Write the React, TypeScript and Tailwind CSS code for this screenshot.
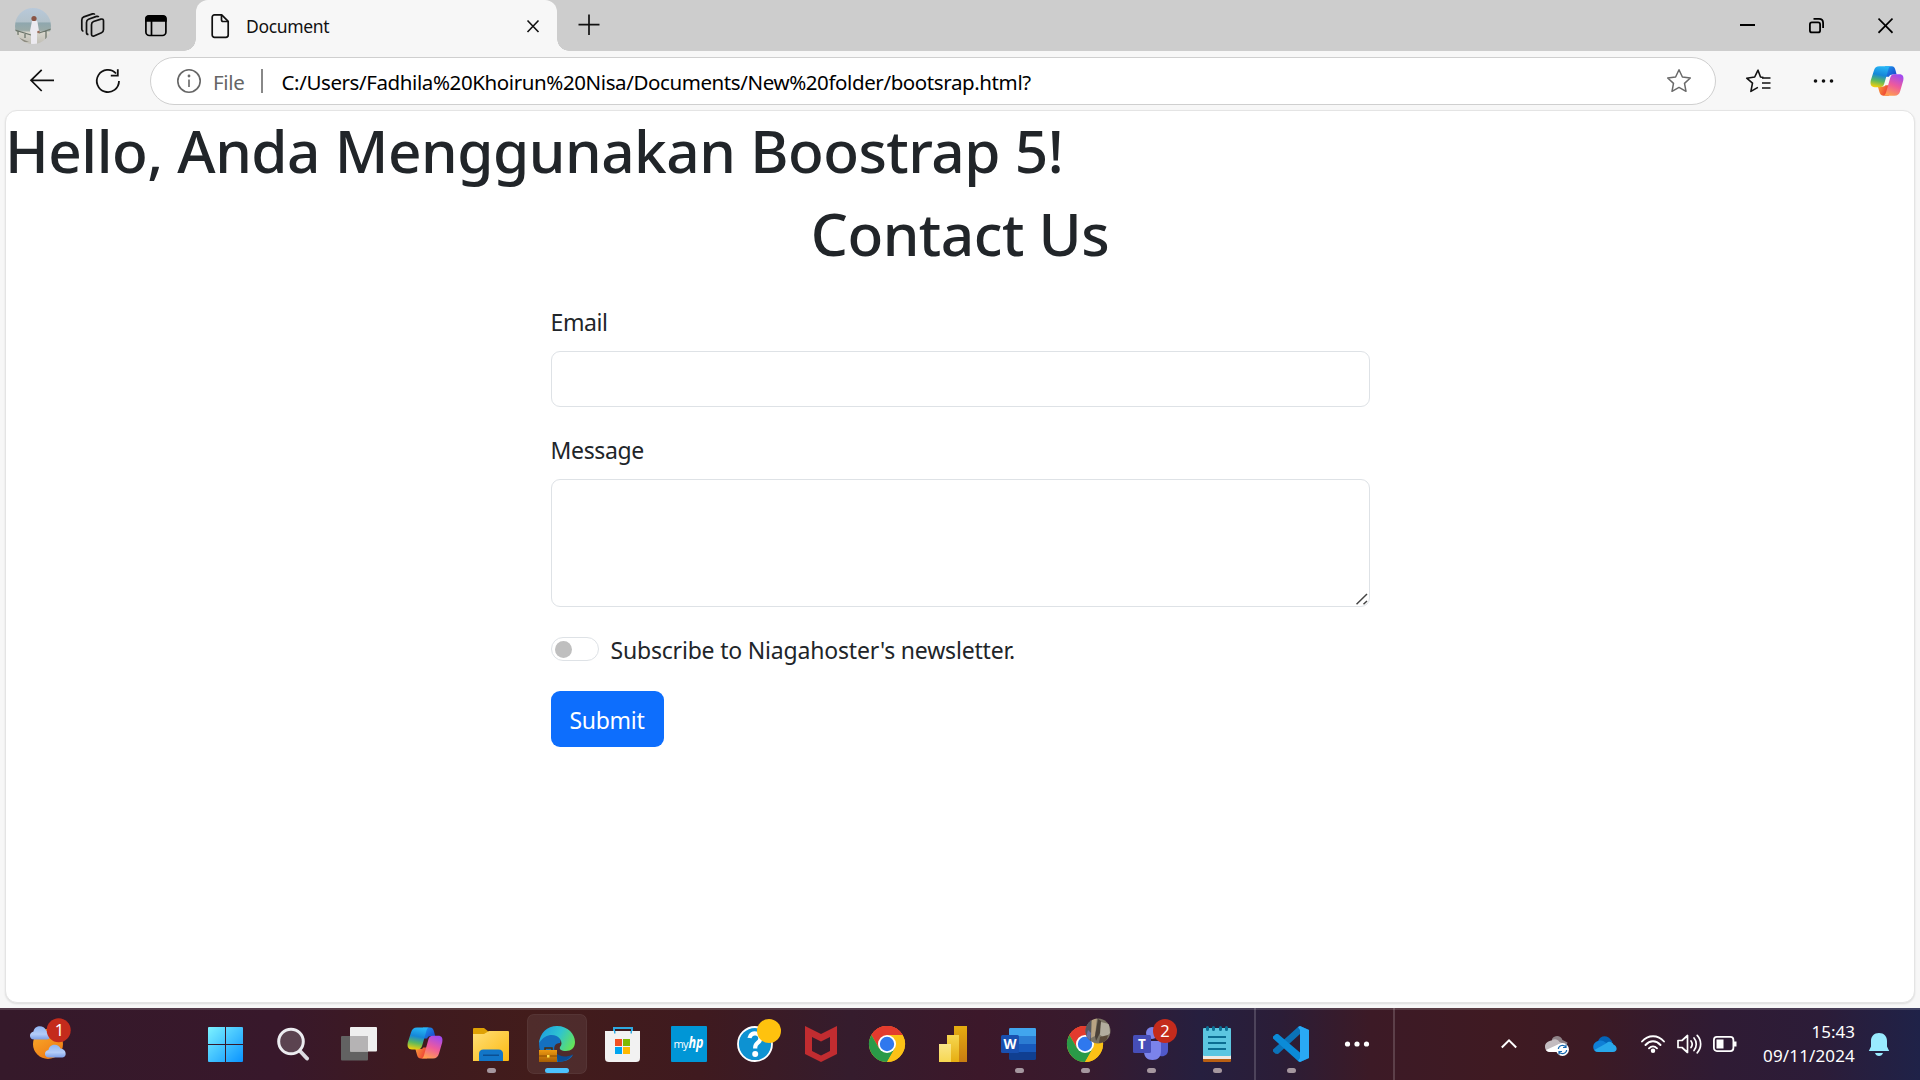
import React from 'react';

const UI = "font-['Noto_Sans','Open_Sans',sans-serif]";

function CopilotDefs({ id }: { id: string }) {
  return (
    <defs>
      <linearGradient id={`${id}a`} x1="0.5" y1="0" x2="0.3" y2="1">
        <stop offset="0" stopColor="#27b5f5" />
        <stop offset="0.4" stopColor="#1587d8" />
        <stop offset="0.7" stopColor="#5cb85f" />
        <stop offset="1" stopColor="#f3cf0c" />
      </linearGradient>
      <linearGradient id={`${id}b`} x1="0.7" y1="0" x2="0.3" y2="1">
        <stop offset="0" stopColor="#a24af0" />
        <stop offset="0.5" stopColor="#ee5a9c" />
        <stop offset="1" stopColor="#ffa04e" />
      </linearGradient>
      <linearGradient id={`${id}c`} x1="0" y1="0" x2="1" y2="1">
        <stop offset="0" stopColor="#1c9cf0" />
        <stop offset="1" stopColor="#1b3fc8" />
      </linearGradient>
      <linearGradient id={`${id}d`} x1="0" y1="0" x2="1" y2="0.4">
        <stop offset="0" stopColor="#f8a13a" />
        <stop offset="1" stopColor="#ee3b35" />
      </linearGradient>
    </defs>
  );
}

function CopilotShape({ id }: { id: string }) {
  return (
    <>
      <CopilotDefs id={id} />
      <path d="M16 1h7c2.300 0 3.300 1.600 4 4l1.200 4.500h-4c-2.200 0-3.400.8-4.200 2.500h-4z" fill={`url(#${id}c)`} />
      <path d="M20 32h-6c-2.500 0-3.400-1.600-4.100-4L8.400 22.500h4.600c1.800 0 2.700-.4 3.300-1.500h4z" fill={`url(#${id}d)`} />
      <path d="M10 1h12.500c-2 0-2.600 1.500-3.300 4l-4 14c-.8 2.800-2 4-4.500 4H5C1 23 0 20 .8 16L4 6c1-3.500 2.800-5 6-5z" fill={`url(#${id}a)`} />
      <path d="M26 32H13.800c2 0 2.700-1.500 3.400-4l4.200-15c.8-2.600 2-3.700 4.500-3.700H31c4 0 5 2.700 4.200 6.700L32 27c-1 3.500-2.800 5-6 5z" fill={`url(#${id}b)`} />
    </>
  );
}

function TabStrip() {
  return (
    <div className="flex h-[51px] items-stretch bg-[#cdcdcd]">
      <div className="flex w-[196px] items-center">
        <svg className="ml-[15px] h-9 w-9 rounded-full" viewBox="0 0 36 36">
          <defs>
            <linearGradient id="sky" x1="0" y1="0" x2="0" y2="1">
              <stop offset="0" stopColor="#b8c9da" />
              <stop offset="0.38" stopColor="#b3c2cb" />
              <stop offset="0.42" stopColor="#8fa7ae" />
              <stop offset="0.62" stopColor="#9aaaa7" />
              <stop offset="0.68" stopColor="#d8d6cc" />
              <stop offset="1" stopColor="#bfbdb4" />
            </linearGradient>
          </defs>
          <rect width="36" height="36" fill="url(#sky)" />
          <path d="M0 22l16 5M24 25l12-4M3 23v4M10 25v5M31 22v9" stroke="#6d766c" strokeWidth="1.300" />
          <path d="M0 28l14 6H0z" fill="#8d8b80" />
          <path d="M17 13c2-1.500 5-1 5.500 1l1.500 9-2 2v11h-6V26l-1-3z" fill="#eceaf0" />
          <circle cx="19" cy="10.500" r="2.600" fill="#8a5546" />
          <circle cx="23.500" cy="24" r="1.300" fill="#9a6a58" />
        </svg>
        <svg className="ml-[27px] h-7 w-7" viewBox="0 0 28 28" fill="none" stroke="#111" strokeWidth="1.700" strokeLinejoin="round">
          <path d="M15.500 9.500l7.500-2.400c1.400-.4 2.500.4 2.500 1.700v9c0 1.300-.8 2.400-2 2.900L16 24c-1.500.5-2.500-.3-2.500-1.700v-9.600c0-1.500.7-2.700 2-3.200z" />
          <path d="M10.500 22.500c-1.300 0-2-.8-2-2v-10c0-1.600.7-2.700 2-3.200l8-2.900c1-.3 1.800 0 2.200.7" />
          <path d="M5.500 19c-1 0-1.700-.8-1.700-2V8c0-1.500.7-2.600 2-3.100l8.700-3c1-.3 1.800-.1 2.300.7" />
        </svg>
        <svg className="ml-[38px] h-6 w-6" viewBox="0 0 24 24" fill="none" stroke="#000" strokeWidth="1.700">
          <rect x="1.900" y="1.900" width="20" height="19.600" rx="3.500" />
          <path d="M2 7V4.500C2 3 3 2 4.500 2h14.800c1.500 0 2.600 1 2.600 2.500V7z" fill="#000" />
          <path d="M7.500 7v14" />
        </svg>
      </div>
      <div className="relative flex w-[361px] items-center rounded-t-[12px] bg-[#f7f7f7]">
        <div className="absolute bottom-0 -left-3 h-3 w-3 bg-[radial-gradient(circle_at_0_0,#cdcdcd_11.5px,#f7f7f7_12px)]" />
        <div className="absolute -right-3 bottom-0 h-3 w-3 bg-[radial-gradient(circle_at_100%_0,#cdcdcd_11.5px,#f7f7f7_12px)]" />
        <svg className="ml-[14px] h-[26px] w-5" viewBox="0 0 20 26" fill="none" stroke="#111" strokeWidth="1.700" strokeLinejoin="round">
          <path d="M4.500 1.900h7.200l6.500 6.500V22c0 1.400-1 2.300-2.300 2.300H4.500c-1.300 0-2.300-1-2.300-2.300V4.200c0-1.400 1-2.300 2.300-2.300z" />
          <path d="M11.500 2v4.800c0 1 .7 1.700 1.700 1.700H18" />
        </svg>
        <span className="ml-4 flex-1 text-[17.500px] leading-6 tracking-[-0.35px] text-[#111]">Document</span>
        <svg className="mr-[16px] h-4 w-4" viewBox="0 0 16 16" stroke="#111" strokeWidth="1.600">
          <path d="M2.500 2.500l11 11.500M13.500 2.500l-11 11.500" />
        </svg>
      </div>
      <svg className="ml-[20px] h-[50px] w-6" viewBox="0 0 24 50" stroke="#111" strokeWidth="1.700">
        <path d="M1.500 24.700h21M12 14.500v20.500" />
      </svg>
      <div className="ml-auto flex items-center">
        <svg className="mr-[54px] h-[51px] w-[15px]" viewBox="0 0 15 51">
          <rect y="24" width="15" height="2" />
        </svg>
        <svg className="mr-[54px] h-[51px] w-[15px]" viewBox="0 0 15 51" fill="none" stroke="#000" strokeWidth="1.800">
          <rect x="0.900" y="22.400" width="10.200" height="10" rx="2" />
          <path d="M4.500 18.900H10c2.500 0 4.100 1.600 4.100 4.100V28" />
        </svg>
        <svg className="mr-[27px] h-[51px] w-[15px]" viewBox="0 0 15 51" stroke="#000" strokeWidth="1.700">
          <path d="M0.500 18.500l14 14.300M14.500 18.500l-14 14.300" />
        </svg>
      </div>
    </div>
  );
}

function Toolbar() {
  return (
    <div className="flex h-[60px] items-center bg-[#f7f7f7]">
      <svg className="ml-[29px] h-7 w-7" viewBox="0 0 28 28" fill="none" stroke="#111" strokeWidth="1.700">
        <path d="M25 13.300H2M12.700 2.800L2 13.300l10.700 10.700" />
      </svg>
      <svg className="ml-[37px] h-7 w-7" viewBox="0 0 28 28" fill="none" stroke="#111" strokeWidth="1.800">
        <path d="M25 14a11.100 11.100 0 1 1-2.900-7.500" />
        <path d="M23.800 2.200v6.500h-7" />
      </svg>
      <div className="ml-[28px] flex h-[48px] w-[1566px] items-center rounded-full border-[1.500px] border-[#cfcfcf] bg-white">
        <svg className="ml-[25px] h-[26px] w-[26px]" viewBox="0 0 26 26" fill="none" stroke="#666" strokeWidth="1.600">
          <circle cx="13" cy="13" r="11.200" />
          <path d="M13 11.500v7.500" />
          <circle cx="13" cy="8" r="0.600" fill="#666" />
        </svg>
        <span className="ml-[11px] w-[31px] pt-[1px] text-[20.500px] leading-6 tracking-[-0.35px] text-[#666]">File</span>
        <div className="ml-[17px] h-6 w-[1.500px] bg-[#888]" />
        <span className="ml-[19px] flex-1 pt-[1px] text-[20.500px] leading-6 tracking-[-0.4px] whitespace-nowrap text-black">
          C:/Users/Fadhila%20Khoirun%20Nisa/Documents/New%20folder/bootsrap.html?
        </span>
        <svg className="mr-[23px] h-[26px] w-[26px]" viewBox="0 0 26 26" fill="none" stroke="#6a6a6a" strokeWidth="1.500" strokeLinejoin="round">
          <path d="M13 1.800l3.400 7.200 7.900 1-5.800 5.400 1.500 7.900-7-3.900-7 3.900 1.500-7.900L1.700 10l7.900-1z" />
        </svg>
      </div>
      <svg className="ml-[29px] h-[26px] w-[26px]" viewBox="0 0 26 26" fill="none" stroke="#111" strokeWidth="1.600" strokeLinejoin="round">
        <path d="M18.500 9.500L15.500 9 13 2.200 9.700 9l-8 1.200 5.800 5-1.600 8.200 7-4" />
        <path d="M17 10h8.500M17 15h8.500M17 20h8.500" />
      </svg>
      <svg className="ml-[40px] h-6 w-6" viewBox="0 0 24 24" fill="#111">
        <circle cx="4.500" cy="12" r="1.800" />
        <circle cx="12.500" cy="12" r="1.800" />
        <circle cx="20.500" cy="12" r="1.800" />
      </svg>
      <svg className="mr-[16px] ml-auto h-[32px] w-[34px]" viewBox="0 0 36 33">
        <CopilotShape id="cpt" />
      </svg>
    </div>
  );
}

function Page() {
  return (
    <div className="mx-[5px] -mt-px h-[893px] overflow-hidden rounded-[12px] border border-[#e4e4e4] bg-white text-[#212529] shadow-[0_1px_2px_#0000001c]">
      <h1 className="mb-3 -ml-[1px] pt-[3px] text-[58.500px] leading-[72px] font-medium tracking-[-0.5px] whitespace-nowrap">
        Hello, Anda Menggunakan Boostrap 5!
      </h1>
      <div className="mx-auto w-[819px]">
        <h1 className="-mt-[1px] mb-3 text-center text-[58.500px] leading-[72px] font-medium tracking-[-0.5px]">Contact Us</h1>
        <div className="pt-[23px]">
          <label className="mb-[11px] block text-[23px] leading-9 tracking-[-0.4px]">Email</label>
          <input aria-label="Email" className="block h-[56px] w-full rounded-[9px] border border-[#dee2e6]" />
        </div>
        <div className="pt-[24px]">
          <label className="mt-[1px] mb-[11px] block text-[23px] leading-9 tracking-[-0.35px]">Message</label>
          <div className="relative">
            <textarea aria-label="Message" className="block h-[128px] w-full resize-none rounded-[9px] border border-[#dee2e6]" />
            <svg className="absolute right-[2px] bottom-[2px] h-3 w-3" viewBox="0 0 12 12" stroke="#444" strokeWidth="1.500">
              <path d="M0.500 11.300L11 1M7.500 11.300L11 8" />
            </svg>
          </div>
        </div>
        <div className="mt-[26px] flex h-9 items-center">
          <div className="-mt-[4px] flex h-6 w-12 items-center rounded-full border border-[#dee2e6] pl-[3px]">
            <div className="h-[17px] w-[17px] rounded-full bg-[#bfbfbf]" />
          </div>
          <span className="-mt-[1px] ml-3 text-[23px] tracking-[-0.19px] whitespace-nowrap">Subscribe to Niagahoster's newsletter.</span>
        </div>
        <button className="mt-[22px] block h-[56px] w-[113px] rounded-[9px] bg-[#0d6efd] pt-[2px] text-[23px] leading-9 tracking-[-0.3px] text-white">Submit</button>
      </div>
    </div>
  );
}

function Cell({ children, running = false }: { children: React.ReactNode; running?: boolean }) {
  return (
    <svg className="h-[72px] w-[66px] shrink-0" viewBox="0 0 66 72">
      {children}
      {running && <rect x="31" y="60" width="9" height="5" rx="2.500" fill="#a5979f" />}
    </svg>
  );
}

function Chrome() {
  return (
    <>
      <circle cx="35" cy="36" r="18" fill="#fbc116" />
      <path d="M35 36L19.400 27A18 18 0 0 1 50.600 27z" fill="#e33b2e" />
      <path d="M35 27h15.600A18 18 0 0 0 19.400 27L27.200 40.500 35 36z" fill="#e33b2e" />
      <path d="M19.400 27A18 18 0 0 0 35 54L42.800 40.500 35 36l-7.800 4.500z" fill="#2a9a48" />
      <path d="M42.800 40.500L35 54A18 18 0 0 0 50.600 27H35z" fill="#fbc116" />
      <circle cx="35" cy="36" r="9" fill="#fff" />
      <circle cx="35" cy="36" r="7.200" fill="#2f78ee" />
    </>
  );
}

function Apps() {
  return (
    <>
      <Cell>
        <defs>
          <linearGradient id="win" gradientUnits="userSpaceOnUse" x1="16" y1="19" x2="51" y2="54">
            <stop offset="0" stopColor="#7df3ff" />
            <stop offset="1" stopColor="#0a93ff" />
          </linearGradient>
        </defs>
        <path d="M16 20a1 1 0 0 1 1-1h16v17H16zM34 19h16a1 1 0 0 1 1 1v16H34zM16 37h17v17H17a1 1 0 0 1-1-1zM34 37h17v16a1 1 0 0 1-1 1H34z" fill="url(#win)" />
      </Cell>
      <Cell>
        <path d="M42 43l7 7.500" stroke="#dcdce2" strokeWidth="4" strokeLinecap="round" />
        <circle cx="33" cy="33.500" r="12.300" fill="#5b4350" stroke="#ececf0" strokeWidth="3" />
      </Cell>
      <Cell>
        <rect x="17" y="28" width="27" height="24.500" rx="1" fill="#626262" />
        <rect x="26" y="19" width="27" height="24.500" rx="1" fill="#efefef" />
        <rect x="26" y="28" width="18" height="15.500" fill="#b5b3b4" />
      </Cell>
      <Cell>
        <g transform="translate(17 18.500)">
          <CopilotShape id="cpb" />
        </g>
      </Cell>
      <Cell running>
        <defs>
          <linearGradient id="fold" x1="0" y1="0" x2="1" y2="1">
            <stop offset="0" stopColor="#ffdf76" />
            <stop offset="1" stopColor="#fcb912" />
          </linearGradient>
        </defs>
        <path d="M17 21a1 1 0 0 1 1-1h10l5 4v6H17z" fill="#dfa104" />
        <path d="M17 26h11l5-3h19a1 1 0 0 1 1 1v28a1 1 0 0 1-1 1H17z" fill="url(#fold)" />
        <path d="M23 53v-7c0-3 1.500-4.500 4.500-4.500h15c3 0 4.500 1.500 4.500 4.500v7z" fill="#1276c8" />
        <rect x="27" y="46.500" width="16" height="1.500" fill="#0b4f92" />
      </Cell>
      <Cell>
        <defs>
          <linearGradient id="edgeTop" x1="0" y1="0.300" x2="1" y2="0.700">
            <stop offset="0" stopColor="#1d9fe0" />
            <stop offset="0.500" stopColor="#2fc4cf" />
            <stop offset="1" stopColor="#67e455" />
          </linearGradient>
          <linearGradient id="bag" x1="0" y1="0" x2="0" y2="1">
            <stop offset="0" stopColor="#ed9a12" />
            <stop offset="1" stopColor="#a85e03" />
          </linearGradient>
        </defs>
        <rect x="5.500" y="6.500" width="59" height="59" rx="6" fill="#ffffff12" stroke="#ffffff14" />
        <path d="M17 36c0-6 5-10 12-10s11 5 9 9c-5 0-7 4-5 9 3 5 10 7 18 3-3 5-9 7-16 7-10 0-18-7-18-18z" fill="#1470c0" />
        <path d="M34 45c4 4 11 5 17 1-3 5-9 8-15 8z" fill="#0b4d92" />
        <path d="M17 35c1-10 8-17 18-17 11 0 18 8 18 16 0 6-4 9-9 9-5 0-7-2-6-4 2-2 2-5 0-8-4-6-15-6-21 4z" fill="url(#edgeTop)" />
        <path d="M23 42v-2h7v2" fill="none" stroke="#4a2b0b" strokeWidth="1.500" />
        <rect x="17" y="42" width="18" height="12" fill="url(#bag)" />
        <rect x="17" y="47.500" width="18" height="1" fill="#8a4b03" />
        <rect x="25" y="47" width="2.500" height="2.500" fill="#ffe14a" />
        <rect x="23" y="60" width="24" height="5" rx="2.500" fill="#4cc2ff" />
      </Cell>
      <Cell>
        <path d="M26 25v-5h18v5" fill="none" stroke="#2ea9e0" strokeWidth="2" />
        <path d="M17 23h35v27c0 3-1.500 4-4 4H21c-2.500 0-4-1-4-4z" fill="#f2f2f2" />
        <path d="M26 23v2.500h1.500V23zM42.500 23v2.500H44V23z" fill="#2ea9e0" />
        <path d="M27 31h7v7h-7z" fill="#f25022" />
        <path d="M35 31h7v7h-7z" fill="#7fba00" />
        <path d="M27 39h7v7h-7z" fill="#00a4ef" />
        <path d="M35 39h7v7h-7z" fill="#ffb900" />
      </Cell>
      <Cell>
        <rect x="17" y="18" width="36" height="36" rx="1" fill="#0096d6" />
        <text x="19.500" y="40" fontSize="11" fill="#fff" textLength="15" fontFamily="Open Sans, sans-serif">my</text>
        <text x="34.500" y="40" fontSize="16" fill="#fff" textLength="15" lengthAdjust="spacingAndGlyphs" fontStyle="italic" fontWeight="700" fontFamily="Open Sans, sans-serif">hp</text>
      </Cell>
      <Cell>
        <circle cx="35" cy="36" r="17" fill="#0d92d2" stroke="#fff" strokeWidth="1.800" />
        <path d="M29.500 30c.5-4 4-5 6.500-4.500 4 .8 5.500 4.500 3.500 7.500-1.500 2-4.300 2.500-4.300 6.500v1" fill="none" stroke="#fff" strokeWidth="4.200" />
        <circle cx="35.200" cy="46" r="3" fill="#fff" />
        <circle cx="49" cy="23" r="12" fill="#ffc20e" />
      </Cell>
      <Cell>
        <path d="M19 18l16 8 16-8v28l-16 8-16-8zM26 29v14l9 4.500 9-4.500V29l-9 4.500z" fill="#c12c30" fillRule="evenodd" />
      </Cell>
      <Cell>
        <Chrome />
      </Cell>
      <Cell>
        <defs>
          <linearGradient id="pb1" x1="0" y1="0" x2="0" y2="1">
            <stop offset="0" stopColor="#e5ad10" />
            <stop offset="1" stopColor="#c87c12" />
          </linearGradient>
          <linearGradient id="pb2" x1="0" y1="0" x2="0" y2="1">
            <stop offset="0" stopColor="#f6d751" />
            <stop offset="1" stopColor="#e6ad10" />
          </linearGradient>
          <linearGradient id="pb3" x1="0" y1="0" x2="0" y2="1">
            <stop offset="0" stopColor="#f9e589" />
            <stop offset="1" stopColor="#f6d751" />
          </linearGradient>
        </defs>
        <rect x="36" y="18" width="13" height="36" fill="url(#pb1)" />
        <rect x="29" y="27" width="12" height="27" fill="url(#pb2)" />
        <rect x="21" y="36" width="12" height="18" fill="url(#pb3)" />
      </Cell>
      <Cell running>
        <rect x="25" y="20" width="27" height="32" rx="1.500" fill="#103f91" />
        <path d="M25 21.500c0-1 .5-1.500 1.500-1.500h24c1 0 1.500.5 1.500 1.500V28H25z" fill="#41a5ee" />
        <rect x="25" y="28" width="27" height="8" fill="#2b7cd3" />
        <rect x="25" y="36" width="27" height="8" fill="#185abd" />
        <rect x="17" y="27" width="18" height="18" rx="1.500" fill="#1950b0" />
        <text x="26" y="41" fontSize="13.500" fontWeight="700" fill="#fff" textAnchor="middle" fontFamily="Open Sans, sans-serif">W</text>
      </Cell>
      <Cell running>
        <Chrome />
        <defs>
          <clipPath id="profile">
            <circle cx="48" cy="23" r="12.500" />
          </clipPath>
        </defs>
        <g clipPath="url(#profile)">
          <rect x="35" y="10" width="26" height="26" fill="#7b7464" />
          <path d="M35 10h6v26h-6z" fill="#55565e" />
          <path d="M42 12l5-2-2 18-4 2z" fill="#b9a483" />
          <path d="M48 11l3 2-1 12-4 8-1-5z" fill="#4a4138" />
          <path d="M51 14l8 2 1 9-5 5-5-3z" fill="#b2ad9e" />
          <path d="M38 22l3 3-1 7-4-3z" fill="#6672a2" />
          <path d="M50 29l8-2-2 7-7 1z" fill="#5a4a39" />
        </g>
      </Cell>
      <Cell running>
        <circle cx="36" cy="25" r="6" fill="#7b83eb" />
        <path d="M40 34h12v8c0 5-4 7-8 6z" fill="#5059c9" />
        <path d="M28 33h17v10c0 6-3 9-8.500 9S28 49 28 43z" fill="#7b83eb" />
        <rect x="17" y="27" width="18" height="18" rx="1.500" fill="#464eb8" />
        <text x="26" y="41" fontSize="13.500" fontWeight="700" fill="#fff" textAnchor="middle" fontFamily="Open Sans, sans-serif">T</text>
        <circle cx="49" cy="23" r="12" fill="#c42b1c" />
        <text x="49" y="28.700" fontSize="16.500" fill="#fff" textAnchor="middle" fontFamily="Noto Sans, sans-serif">2</text>
      </Cell>
      <Cell running>
        <rect x="21" y="47" width="28" height="7" rx="1" fill="#b95f12" />
        <rect x="21" y="45" width="28" height="6" fill="#f1e9e2" />
        <rect x="21" y="20" width="28" height="28" rx="1" fill="#5cc6e0" />
        <path d="M26 29h18M26 35h18M26 41h18" stroke="#0b6d92" strokeWidth="1.800" />
        <path d="M25.500 19.500v2M31.500 19.500v2M38.500 19.500v2M44.500 19.500v2" stroke="#0c6f94" strokeWidth="3" strokeLinecap="round" />
      </Cell>
    </>
  );
}

function Tray() {
  return (
    <div className="ml-[106px] flex h-[72px] items-center">
      <svg className="h-[72px] w-4" viewBox="0 0 16 72" fill="none" stroke="#fff" strokeWidth="2">
        <path d="M0.800 39.500L8 32.300l7.200 7.200" />
      </svg>
      <svg className="ml-[28px] h-[72px] w-[28px]" viewBox="0 0 28 72">
        <path d="M7 31c3-4.500 9-3.500 10.500 1l5 2.500-2 7-14-5z" fill="#8f8388" />
        <path d="M5.500 44C2 44 0 42 0 38.500S3 33 6.500 32.500c3-2 6-1.500 8 1.500l7 3v7z" fill="#c3bcc0" />
        <path d="M1 42l13-6 6 8H5.500C3.500 44 2 43.500 1 42z" fill="#fff" />
        <circle cx="17.500" cy="41.500" r="6.500" fill="#fff" />
        <path d="M13.300 41a4.200 4.200 0 0 1 7.500-2M21.700 42a4.200 4.200 0 0 1-7.500 2M21 36.500v3h-3M14 46.500v-3h3" fill="none" stroke="#1668b0" strokeWidth="1.200" />
      </svg>
      <svg className="ml-[20px] h-[72px] w-6" viewBox="0 0 24 72">
        <path d="M5 33c2-6 10-6.500 13-1l1.500 2L12 39l-9-3z" fill="#0364b8" />
        <path d="M5.500 33c3-1 5 0 7 1.500l5 3L8 44H5.500C-1.500 44-1.500 34 5.500 33z" fill="#0f7fd6" />
        <path d="M13 35.500c2-2.500 6-2.500 7.500 1 4 1.500 4.500 7.500-.5 7.500H5.500c-2 0-3.500-.8-4.200-2z" fill="#28a8ea" />
      </svg>
      <svg className="ml-[24px] h-[72px] w-6" viewBox="0 0 24 72" fill="none" stroke="#fff" strokeWidth="1.900" strokeLinecap="round">
        <path d="M1 33.500c6-7 16-7 22 0M4.500 37c4.500-5 10.500-5 15 0M8 40.300c2.500-2.600 5.500-2.600 8 0" />
        <circle cx="12" cy="42.700" r="1.300" fill="#fff" />
      </svg>
      <svg className="ml-[12px] h-[72px] w-[25px]" viewBox="0 0 25 72" fill="none" stroke="#fff" strokeWidth="1.700" strokeLinecap="round" strokeLinejoin="round">
        <path d="M1 32.500h4l5.500-5v17l-5.500-5H1z" />
        <path d="M14 33c1.500 2 1.500 4.500 0 6.500M17 30c3 3.500 3 9 0 12.500M20.200 27.300c4.600 5 4.600 12.500 0 17.500" />
      </svg>
      <svg className="ml-[11px] h-[72px] w-6" viewBox="0 0 24 72" fill="none" stroke="#fff" strokeWidth="1.800">
        <rect x="0.900" y="28.900" width="19.500" height="14.200" rx="3" />
        <rect x="3.500" y="31.500" width="7" height="9" fill="#fff" stroke="none" />
        <path d="M22 33.500v5" strokeWidth="3" />
      </svg>
      <div className="flex w-[118px] flex-col items-end text-[17px] leading-6 text-white">
        <span>15:43</span>
        <span className="tracking-[0.15px]">09/11/2024</span>
      </div>
      <svg className="ml-[13px] h-[72px] w-[22px]" viewBox="0 0 22 72" fill="#99ebff">
        <path d="M11 25c5 0 8 3.500 8 8v5.500l2.200 4.500H.8L3 38.500V33c0-4.500 3-8 8-8zM7 45h8c-.7 2-2 3-4 3s-3.300-1-4-3z" />
      </svg>
    </div>
  );
}

function Taskbar() {
  return (
    <div className="flex h-[72px] overflow-hidden bg-[linear-gradient(90deg,#35192a_0px,#38182b_280px,#3e1a20_400px,#421c1b_530px,#3f1a1f_700px,#351c2d_850px,#3c182a_980px,#381a2d_1080px,#261f3f_1200px,#2b1d37_1280px,#3c1a26_1370px,#3f1a22_1500px,#3c1a24_1590px,#2f1b34_1720px,#2c1c38_1820px,#1f2248_1920px)] shadow-[inset_0_2px_0_#ffffff26]">
      <svg className="h-[72px] w-[192px] shrink-0" viewBox="0 0 192 72">
        <defs>
          <linearGradient id="sun" x1="0" y1="0" x2="0.600" y2="1">
            <stop offset="0" stopColor="#f9b02f" />
            <stop offset="1" stopColor="#f07b13" />
          </linearGradient>
          <linearGradient id="cloud" x1="0" y1="0" x2="0" y2="1">
            <stop offset="0" stopColor="#8fb4f2" />
            <stop offset="0.600" stopColor="#b4cdf9" />
            <stop offset="1" stopColor="#7c9fe8" />
          </linearGradient>
        </defs>
        <circle cx="48" cy="36" r="15" fill="url(#sun)" />
        <path d="M34 31.500c-5 0-5.500-7-.5-8 1-6.500 10.500-7 12.500-1 5 0 6 9 1 9z" fill="url(#cloud)" />
        <path d="M49 49.500c-5 0-5.500-6.500-.5-7.500 1-6.500 10-7 12-1.500 6 0 7 9 2 9z" fill="url(#cloud)" />
        <circle cx="58.700" cy="22.300" r="12" fill="#c42b1c" />
        <text x="59.500" y="28" fontSize="16.500" fill="#fff" textAnchor="middle" fontFamily="Noto Sans, sans-serif">1</text>
      </svg>
      <Apps />
      <div className="ml-[6px] w-[2px] shrink-0 bg-[#ffffff2b]" />
      <Cell running>
        <path d="M44 18l9 4v28l-9 4V26L22 46l-2.500-.2L17 43.500v-2L42 19z" fill="#0b72b8" />
        <path d="M17 30.500v-2l3-2.500h2l22 18.500V54l-2-1z" fill="#0b8bd8" />
        <path d="M44 18l9 4v28l-9 4-2-1 2-3V22l-2-3z" fill="#29a9f5" />
      </Cell>
      <svg className="h-[72px] w-[71px] shrink-0" viewBox="0 0 71 72" fill="#fff">
        <circle cx="25.500" cy="36" r="2.600" />
        <circle cx="35" cy="36" r="2.600" />
        <circle cx="44.500" cy="36" r="2.600" />
      </svg>
      <div className="w-[2px] shrink-0 bg-[#ffffff2b]" />
      <Tray />
    </div>
  );
}

export default function App() {
  return (
    <div className={`flex h-[1080px] w-[1920px] flex-col overflow-hidden bg-[#f7f7f7] ${UI}`}>
      <TabStrip />
      <Toolbar />
      <Page />
      <div className="flex-1" />
      <Taskbar />
    </div>
  );
}
